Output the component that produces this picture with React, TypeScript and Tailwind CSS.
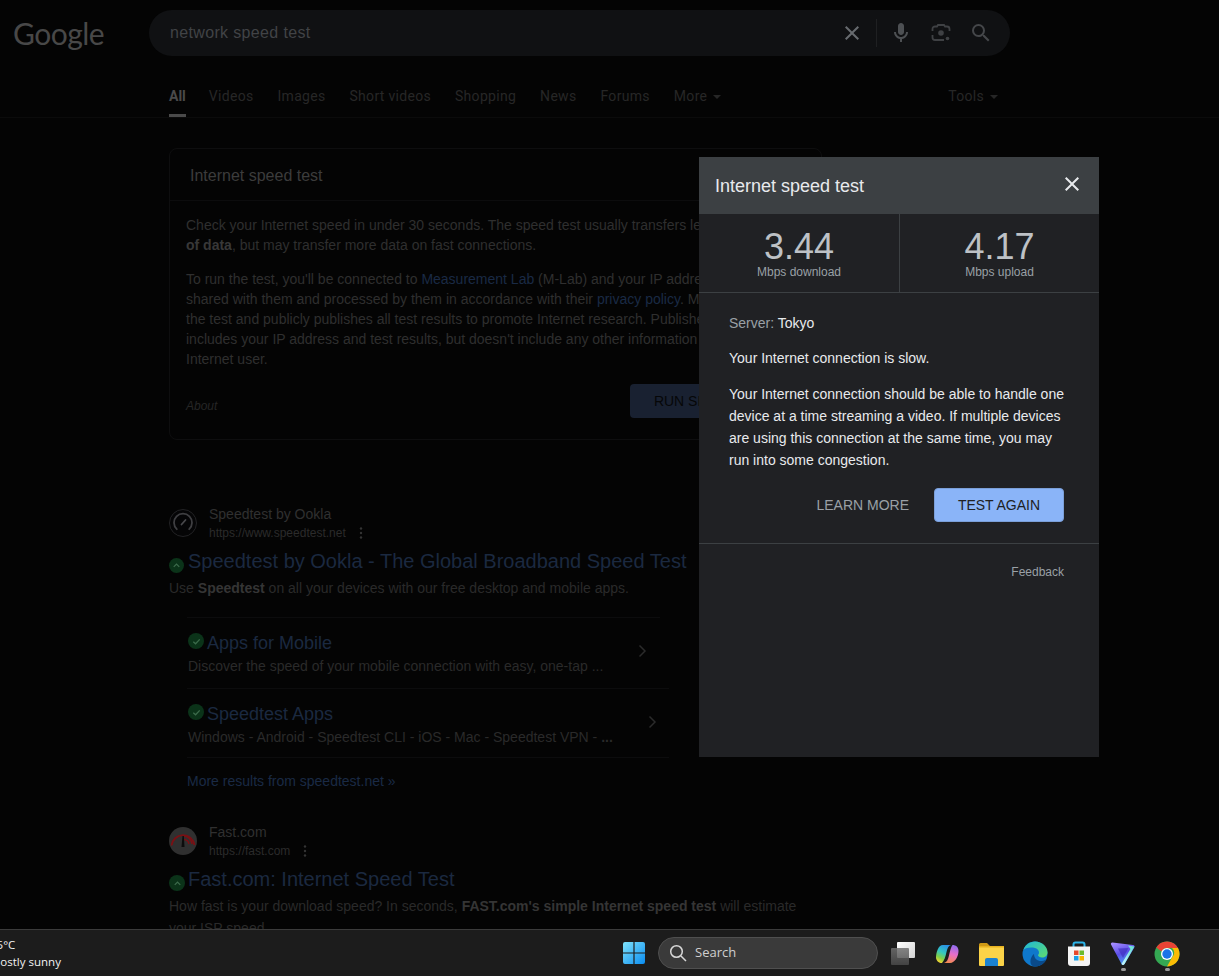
import React from "react";

const Badge = ({ chevron = false, className = "" }: { chevron?: boolean; className?: string }) => (
  <span className={`flex shrink-0 items-center justify-center rounded-full bg-[#0b3319] ${className}`}>
    <svg width="11" height="11" viewBox="0 0 12 12" fill="none" stroke="#3c6b4b" strokeWidth="1.4">
      {chevron ? <path d="M3 7.5 6 4.5l3 3" /> : <path d="M2.5 6.2 5 8.5l4.5-4.8" />}
    </svg>
  </span>
);

const Dots = () => (
  <svg width="4" height="14" viewBox="0 0 4 14" fill="#343434" className="ml-px">
    <circle cx="2" cy="2.5" r="1.2" />
    <circle cx="2" cy="7" r="1.2" />
    <circle cx="2" cy="11.5" r="1.2" />
  </svg>
);

const Caret = ({ color = "#262626" }: { color?: string }) => (
  <svg width="8" height="4" viewBox="0 0 8 4" className="ml-[6px] mt-[1px]">
    <path d="M0 0h8L4 4z" fill={color} />
  </svg>
);

const Chevron = () => (
  <svg width="9" height="14" viewBox="0 0 9 14" fill="none" stroke="#2b2b2b" strokeWidth="1.5" className="mt-[13px]">
    <path d="M1.5 1.5 7 7l-5.500 5.500" />
  </svg>
);

const Ookla = () => (
  <svg width="28" height="28" viewBox="0 0 28 28" fill="none" className="shrink-0">
    <circle cx="14" cy="14" r="13.500" fill="#050506" stroke="#232325" />
    <path d="M7.800 20.200A9 9 0 1 1 20.200 20.200" stroke="#3f3f42" strokeWidth="1.800" strokeLinecap="round" />
    <path d="M12.500 15.500 16.500 11" stroke="#48484b" strokeWidth="1.800" strokeLinecap="round" />
  </svg>
);

const FastIcon = () => (
  <svg width="28" height="28" viewBox="0 0 28 28" fill="none" className="shrink-0">
    <circle cx="14" cy="14" r="14" fill="#303030" />
    <path d="M2.500 18.500A11.600 11.600 0 0 1 25.500 18" stroke="#7a1014" strokeWidth="1.900" />
    <path d="M15 9A9 9 0 0 1 23 17M15 12.500A5.500 5.500 0 0 1 20 17" stroke="#7a1014" strokeWidth="1.500" />
    <path d="M13.500 9h1.300l.7 11h-3z" fill="#0c0c0c" />
  </svg>
);

const SearchIcons = () => (
  <div className="flex items-center">
    <svg width="24" height="24" viewBox="0 0 24 24" fill="#676b6f" className="mr-[12px]">
      <path d="M19 6.41 17.59 5 12 10.59 6.41 5 5 6.41 10.59 12 5 17.59 6.41 19 12 13.41 17.59 19 19 17.59 13.41 12z" />
    </svg>
    <span className="h-[28px] w-px bg-[#1f2022]" />
    <svg width="24" height="24" viewBox="0 0 24 24" fill="#4d5053" className="ml-[12px]">
      <path d="M12 14c1.66 0 3-1.34 3-3V5c0-1.66-1.34-3-3-3S9 3.34 9 5v6c0 1.66 1.34 3 3 3z" />
      <path d="M17 11c0 2.76-2.24 5-5 5s-5-2.24-5-5H5c0 3.53 2.61 6.43 6 6.92V21h2v-3.08c3.39-.49 6-3.39 6-6.92h-2z" />
    </svg>
    <svg width="20" height="20" viewBox="0 0 20 20" fill="none" stroke="#3f4144" strokeWidth="1.800" className="ml-[18px]">
      <path d="M1.500 8V6a2.500 2.500 0 0 1 2.500-2.500h2l1-1.500h6l1 1.500h2A2.500 2.500 0 0 1 18.500 6v2M1.500 12v2.500A2.500 2.500 0 0 0 4 17h9" />
      <circle cx="10" cy="10" r="2.800" fill="#3f4144" stroke="none" />
      <circle cx="16.500" cy="15.500" r="1.800" fill="#3f4144" stroke="none" />
    </svg>
    <svg width="24" height="24" viewBox="0 0 24 24" fill="#45474a" className="ml-[18px]">
      <path d="M15.5 14h-.79l-.28-.27A6.471 6.471 0 0 0 16 9.5 6.5 6.5 0 1 0 9.5 16c1.61 0 3.09-.59 4.23-1.57l.27.28v.79l5 4.99L20.49 19l-4.99-5zm-6 0C7.01 14 5 11.99 5 9.5S7.01 5 9.5 5 14 7.01 14 9.5 11.99 14 9.5 14z" />
    </svg>
  </div>
);

const Tab = ({ label, active = false, caret = false }: { label: string; active?: boolean; caret?: boolean }) => (
  <div className={`flex h-[41px] items-center border-b-[3px] pt-[2px] ${active ? "-mr-px border-[#4a4a4a] font-bold text-[#4a4a4a]" : "border-transparent tracking-[0.3px] text-[#272727]"}`}>
    <span className="font-['Roboto',sans-serif] text-[14px]">{label}</span>
    {caret && <Caret />}
  </div>
);

const Sitelink = ({ title, children, rowClass }: { title: string; children: React.ReactNode; rowClass: string }) => (
  <div className={`flex w-[482px] items-start justify-between border-b border-[#0c0c0d] pl-px pt-[13px] ${rowClass}`}>
    <div>
      <div className="flex h-[24px] items-center gap-[3px]">
        <Badge className="-mt-[4px] h-[16px] w-[16px]" />
        <span className="text-[18px] text-[#1b2940]">{title}</span>
      </div>
      <div className="mt-px text-[14px] leading-[20px] text-[#2a2a2a]">{children}</div>
    </div>
    <Chevron />
  </div>
);

const WinLogo = () => (
  <svg width="24" height="24" viewBox="0 0 24 24">
    <defs>
      <linearGradient id="winG" x1="0" y1="0" x2="1" y2="1">
        <stop offset="0" stopColor="#7fe3fb" />
        <stop offset="1" stopColor="#0a8cf0" />
      </linearGradient>
    </defs>
    <path fill="url(#winG)" d="M1 3a2 2 0 0 1 2-2h8.400v10.400H1zM12.600 1H21a2 2 0 0 1 2 2v8.400H12.600zM1 12.600h10.400V23H3a2 2 0 0 1-2-2zM12.600 12.600H23V21a2 2 0 0 1-2 2h-8.400z" />
  </svg>
);

const TaskView = () => (
  <svg width="26" height="26" viewBox="0 0 26 26">
    <defs>
      <linearGradient id="tvA" x1="0" y1="0" x2="1" y2="1">
        <stop offset="0" stopColor="#ffffff" />
        <stop offset="1" stopColor="#d2d2d2" />
      </linearGradient>
      <linearGradient id="tvB" x1="0" y1="0" x2="0" y2="1">
        <stop offset="0" stopColor="#707070" />
        <stop offset="1" stopColor="#4a4a4a" />
      </linearGradient>
    </defs>
    <rect x="7" y="1" width="18" height="16" rx="1" fill="url(#tvA)" />
    <rect x="1" y="7" width="18" height="17" rx="1" fill="url(#tvB)" fillOpacity="0.85" />
  </svg>
);

const Copilot = () => (
  <svg width="26" height="26" viewBox="0 0 26 26">
    <defs>
      <linearGradient id="coA" x1="0.700" y1="0" x2="0.300" y2="1">
        <stop offset="0" stopColor="#2a8fe8" />
        <stop offset=".45" stopColor="#35c7c0" />
        <stop offset=".75" stopColor="#7fcf4a" />
        <stop offset="1" stopColor="#f6d42f" />
      </linearGradient>
      <linearGradient id="coB" x1="0.600" y1="0" x2="0.400" y2="1">
        <stop offset="0" stopColor="#8f6cf0" />
        <stop offset=".5" stopColor="#e86ec8" />
        <stop offset="1" stopColor="#f58a52" />
      </linearGradient>
    </defs>
    <path fill="url(#coA)" d="M9 4h8c-2.500.5-3.500 3-4.500 7-1 4.500-2 8.500-4.500 11-3 0-5.500-2-6-5 0-5 2-13 7-13z" />
    <path fill="url(#coB)" d="M16 22H10c3-1 4-3.500 5-7.500 1-4.500 2-8.500 3.500-10.500 3.500 0 6 2 6 6 0 5-3.500 12-8.500 12z" />
  </svg>
);

const Folder = () => (
  <svg width="26" height="26" viewBox="0 0 26 26">
    <path d="M1 3.500A1.500 1.500 0 0 1 2.500 2H9l3 3H1z" fill="#cf9a16" />
    <rect x="1" y="5" width="25" height="20" rx="1" fill="#fbd348" />
    <rect x="1" y="5" width="25" height="1.500" fill="#e8b21f" />
    <path d="M7 25v-6a2 2 0 0 1 2-2h9a2 2 0 0 1 2 2v6z" fill="#1b82d1" />
  </svg>
);

const Edge = () => (
  <svg width="26" height="26" viewBox="0 0 26 26">
    <defs>
      <linearGradient id="edA" x1="0" y1="0" x2="1" y2="1">
        <stop offset="0" stopColor="#1fb8d8" />
        <stop offset="1" stopColor="#5fdc6e" />
      </linearGradient>
    </defs>
    <circle cx="13" cy="13" r="12.500" fill="#0f78cc" />
    <path d="M1.500 9C3 4 7.500.5 13 .5c7 0 12.500 5 12.500 11 0 3-2.500 5-5.500 5-2 0-4-1-4-2.500 2-2 1-6-3-7C9 6.200 4 6.500 1.500 9z" fill="url(#edA)" />
    <path d="M24.500 18c-1.500 4.500-6.500 7.500-11 7.500-1.500 0-3-.5-4-1.500-2-2.500-1-8.500 2.500-11 0 5 4 7.500 8 7 2-.3 3.500-1 4.500-2z" fill="#0a4a8a" />
  </svg>
);

const Store = () => (
  <svg width="26" height="26" viewBox="0 0 26 26">
    <path d="M7.500 6V3.500A2 2 0 0 1 9.500 1.500h7a2 2 0 0 1 2 2V6" fill="none" stroke="#2bb3e8" strokeWidth="2" />
    <path d="M2 5.500h22V22a3 3 0 0 1-3 3H5a3 3 0 0 1-3-3z" fill="#f4f4f4" />
    <rect x="8" y="9.500" width="4.500" height="4.500" fill="#e8492c" />
    <rect x="13.500" y="9.500" width="4.500" height="4.500" fill="#6cbb2c" />
    <rect x="8" y="15" width="4.500" height="4.500" fill="#1b9fe8" />
    <rect x="13.500" y="15" width="4.500" height="4.500" fill="#f7b500" />
  </svg>
);

const Proton = () => (
  <svg width="26" height="26" viewBox="0 0 26 26">
    <defs>
      <linearGradient id="prA" x1="0.200" y1="0" x2="0.600" y2="1">
        <stop offset="0" stopColor="#a58cff" />
        <stop offset=".5" stopColor="#5b4de8" />
        <stop offset="1" stopColor="#4aa8f0" />
      </linearGradient>
      <linearGradient id="prB" x1="1" y1="0" x2="0" y2="1">
        <stop offset="0" stopColor="#5fe0d0" />
        <stop offset="1" stopColor="#c8f6ff" />
      </linearGradient>
    </defs>
    <path d="M2.500 1.500 23 4c1.500.2 2 1.500 1.200 2.700L14.500 23c-.8 1.300-2.200 1.300-3 0L1 3.500C.5 2.500 1.200 1.400 2.500 1.500z" fill="url(#prA)" />
    <path d="M24.500 5.500 14.500 23c-.8 1.300-2.200 1.300-3 0l9-15-2.500-3.500z" fill="url(#prB)" />
    <path d="M8 7.500 18.500 7 13 17z" fill="#3a2bb8" fillOpacity="0.6" />
  </svg>
);

const Chrome = () => (
  <svg width="26" height="26" viewBox="0 0 26 26">
    <circle cx="13" cy="13" r="12.500" fill="#34a853" />
    <path d="M13 .5A12.500 12.500 0 0 1 24 7H13a6 6 0 0 0-5.500 3.500L2.300 6.500A12.500 12.500 0 0 1 13 .5z" fill="#ea4335" />
    <path d="M24 7a12.500 12.500 0 0 1-11 18.500L18.300 16a6 6 0 0 0-.3-9z" fill="#fbbc04" />
    <circle cx="13" cy="13" r="6" fill="#fff" />
    <circle cx="13" cy="13" r="4.700" fill="#1a73e8" />
  </svg>
);

const RunDot = () => <span className="mt-px h-[3px] w-[5px] rounded-full bg-[#9a9a9a]" />;

const TaskIcon = ({ children, dot = false, mr }: { children: React.ReactNode; dot?: boolean; mr: string }) => (
  <div className={`flex h-[46px] w-[26px] flex-col items-center pt-[11px] ${mr}`}>
    {children}
    {dot && <RunDot />}
  </div>
);

export default function App() {
  return (
    <div className="relative flex h-[976px] w-full flex-col overflow-hidden bg-[#040404] font-['Liberation_Sans',Arial,sans-serif]">
      <main className="min-h-0 flex-1 overflow-hidden">
        <header className="flex items-start pt-[10px]">
          <div className="w-[149px] pl-[13px] pt-[1px] font-['Lato',sans-serif] text-[30px] leading-[44px] tracking-[-0.5px] text-[#484848]">
            Google
          </div>
          <div className="flex h-[46px] w-[861px] items-center justify-between rounded-full bg-[#101113] pl-[21px] pr-[17px]">
            <span className="text-[16px] tracking-[0.35px] text-[#414346]">network speed test</span>
            <SearchIcons />
          </div>
        </header>

        <nav className="mt-[20px] border-b border-[#0b0b0b]">
          <div className="ml-[169px] flex w-[829px] justify-between">
            <div className="flex gap-[24px]">
              <Tab label="All" active />
              <Tab label="Videos" />
              <Tab label="Images" />
              <Tab label="Short videos" />
              <Tab label="Shopping" />
              <Tab label="News" />
              <Tab label="Forums" />
              <Tab label="More" caret />
            </div>
            <Tab label="Tools" caret />
          </div>
        </nav>

        <section className="ml-[169px] mt-[30px] h-[292px] w-[653px] rounded-[8px] border border-[#0e0e0f]">
          <div className="flex h-[52px] items-center border-b border-[#0c0c0d] px-[20px] pt-[3px] text-[16px] text-[#3c3c3c]">
            Internet speed test
          </div>
          <div className="pl-[16px] pt-[14px] text-[14px] leading-[20px] text-[#2f2f2f]">
            <p className="whitespace-nowrap">
              Check your Internet speed in under 30 seconds. The speed test usually transfers less than 40 MB
              <br />
              <b className="text-[#383838]">of data</b>, but may transfer more data on fast connections.
            </p>
            <p className="mt-[14px] whitespace-nowrap">
              To run the test, you'll be connected to <span className="text-[#1a2a45]">Measurement Lab</span> (M-Lab) and your IP address will be
              <br />
              shared with them and processed by them in accordance with their <span className="text-[#1a2a45]">privacy policy</span>. M-Lab conducts
              <br />
              the test and publicly publishes all test results to promote Internet research. Published information
              <br />
              includes your IP address and test results, but doesn't include any other information about you as an
              <br />
              Internet user.
            </p>
            <div className="mt-[15px] flex h-[34px] items-center justify-between pr-[22px]">
              <i className="mt-[9px] text-[12px] text-[#262626]">About</i>
              <div className="flex h-[34px] items-center rounded-[4px] bg-[#192131] px-[24px] text-[14px] text-[#060708]">RUN SPEED TEST</div>
            </div>
          </div>
        </section>

        <section className="ml-[169px] mt-[64px] w-[560px]">
          <div className="flex items-center gap-[12px]">
            <Ookla />
            <div>
              <div className="text-[14px] leading-[20px] text-[#303030]">Speedtest by Ookla</div>
              <div className="flex h-[18px] items-center gap-[12px] text-[12px] text-[#2b2b2b]">
                https://www.speedtest.net <Dots />
              </div>
            </div>
          </div>
          <div className="mt-[6px] flex h-[26px] items-center gap-[4px] whitespace-nowrap">
            <Badge chevron className="mt-[8px] h-[15px] w-[15px]" />
            <span className="text-[20px] text-[#1b2940]">Speedtest by Ookla - The Global Broadband Speed Test</span>
          </div>
          <p className="mt-[4px] text-[14px] leading-[20px] text-[#2a2a2a]">
            Use <b className="text-[#353535]">Speedtest</b> on all your devices with our free desktop and mobile apps.
          </p>
          <div className="ml-[18px] mt-[19px]">
            <div className="h-px w-[473px] bg-[#0c0c0d]" />
            <Sitelink title="Apps for Mobile" rowClass="h-[71px] pr-[22px]">
              Discover the speed of your mobile connection with easy, one-tap ...
            </Sitelink>
            <Sitelink title="Speedtest Apps" rowClass="h-[69px] pr-[12px]">
              Windows - Android - Speedtest CLI - iOS - Mac - Speedtest VPN - <b>...</b>
            </Sitelink>
            <div className="mt-[13px] text-[14px] leading-[20px] text-[#1a2a45]">More results from speedtest.net »</div>
          </div>
        </section>

        <section className="ml-[169px] mt-[31px] w-[660px]">
          <div className="flex items-center gap-[12px]">
            <FastIcon />
            <div>
              <div className="text-[14px] leading-[20px] text-[#303030]">Fast.com</div>
              <div className="flex h-[18px] items-center gap-[12px] text-[12px] text-[#2b2b2b]">
                https://fast.com <Dots />
              </div>
            </div>
          </div>
          <div className="mt-[6px] flex h-[26px] items-center gap-[3px] whitespace-nowrap">
            <Badge chevron className="mt-[8px] h-[16px] w-[16px]" />
            <span className="text-[20px] text-[#1b2940]">Fast.com: Internet Speed Test</span>
          </div>
          <p className="mt-[3px] whitespace-nowrap text-[14px] leading-[22px] text-[#2a2a2a]">
            How fast is your download speed? In seconds, <b className="text-[#353535]">FAST.com's simple Internet speed test</b> will estimate
            <br />
            your ISP speed.
          </p>
        </section>
      </main>

      <footer className="relative flex h-[47px] shrink-0 items-center border-t border-[#3b3b3b] bg-[#1c1c1c] font-['Open_Sans',sans-serif]">
        <div className="-ml-[10px] w-[622px] text-[11.5px] leading-[17px] text-[#f2f2f2]">
          <div>25°C</div>
          <div>Mostly sunny</div>
        </div>
        <div className="ml-[10px] mr-[12px]">
          <WinLogo />
        </div>
        <div className="mr-[12px] flex h-[32px] w-[220px] items-center rounded-full border border-[#4f4f4f] bg-[#3a3a3a] pl-[10px] text-[13px] text-[#cfcfcf]">
          <svg width="18" height="18" viewBox="0 0 18 18" fill="none" stroke="#d8d8d8" strokeWidth="1.500" className="mr-[8px]">
            <circle cx="7.500" cy="7.500" r="5.800" />
            <path d="m12 12 5 5" />
          </svg>
          Search
        </div>
        <TaskIcon mr="mr-[18px]"><TaskView /></TaskIcon>
        <TaskIcon mr="mr-[18px]"><Copilot /></TaskIcon>
        <TaskIcon mr="mr-[18px]"><Folder /></TaskIcon>
        <TaskIcon mr="mr-[18px]"><Edge /></TaskIcon>
        <TaskIcon mr="mr-[18px]"><Store /></TaskIcon>
        <TaskIcon mr="mr-[18px]" dot><Proton /></TaskIcon>
        <TaskIcon mr="mr-0" dot><Chrome /></TaskIcon>
      </footer>

      <div className="absolute left-[699px] top-[157px] flex h-[600px] w-[400px] flex-col bg-[#202124]">
        <div className="flex h-[56px] shrink-0 items-center justify-between bg-[#3c4043] pl-[16px] pr-[15px]">
          <span className="pt-[2px] text-[18px] text-[#e8eaed]">Internet speed test</span>
          <svg width="24" height="24" viewBox="0 0 24 24" fill="#e8eaed" className="-mt-[2px]">
            <path d="M19 6.41 17.59 5 12 10.59 6.41 5 5 6.41 10.59 12 5 17.59 6.41 19 12 13.41 17.59 19 19 17.59 13.41 12z" />
          </svg>
        </div>
        <div className="grid h-[80px] shrink-0 grid-cols-2 border-y border-[#3c4043]">
          {[
            ["3.44", "Mbps download"],
            ["4.17", "Mbps upload"],
          ].map(([v, l], i) => (
            <div key={l} className={`flex flex-col items-center pt-[13px] ${i === 1 ? "border-l border-[#3c4043]" : ""}`}>
              <div className="text-[36px] leading-[40px] text-[#bdc1c6]">{v}</div>
              <div className="-mt-[3px] text-[12px] leading-[16px] text-[#9aa0a6]">{l}</div>
            </div>
          ))}
        </div>
        <div className="px-[30px] pt-[19px] text-[14px] leading-[22px] text-[#e8eaed]">
          <p>
            <span className="text-[#9aa0a6]">Server: </span>Tokyo
          </p>
          <p className="mt-[13px]">Your Internet connection is slow.</p>
          <p className="mt-[14px] w-[340px]">
            Your Internet connection should be able to handle one device at a time streaming a video. If multiple devices are using this connection at the same time, you may run into some congestion.
          </p>
          <div className="mt-[17px] flex items-center justify-end gap-[25px] pr-[5px]">
            <span className="text-[#9aa0a6]">LEARN MORE</span>
            <span className="flex h-[34px] w-[130px] items-center justify-center rounded-[4px] border border-[#7b9fd8] bg-[#8ab4f8] text-[#202124]">TEST AGAIN</span>
          </div>
        </div>
        <div className="mt-[21px] border-t border-[#3c4043] pr-[35px] pt-[20px] text-right text-[12px] leading-[16px] text-[#9aa0a6]">Feedback</div>
      </div>
    </div>
  );
}
